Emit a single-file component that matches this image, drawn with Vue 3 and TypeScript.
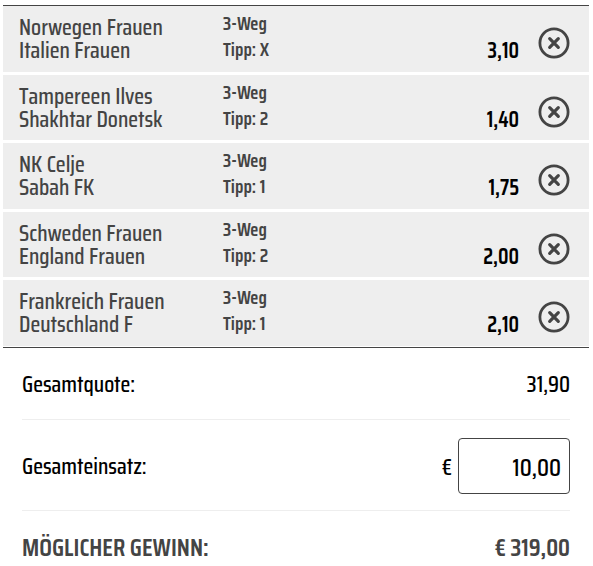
<script setup lang="ts">
import { computed, ref } from 'vue'

interface Bet {
  id: number
  home: string
  away: string
  market: string
  tip: string
  odds: string
}

const bets = ref<Bet[]>([
  { id: 1, home: 'Norwegen Frauen', away: 'Italien Frauen', market: '3-Weg', tip: 'X', odds: '3,10' },
  { id: 2, home: 'Tampereen Ilves', away: 'Shakhtar Donetsk', market: '3-Weg', tip: '2', odds: '1,40' },
  { id: 3, home: 'NK Celje', away: 'Sabah FK', market: '3-Weg', tip: '1', odds: '1,75' },
  { id: 4, home: 'Schweden Frauen', away: 'England Frauen', market: '3-Weg', tip: '2', odds: '2,00' },
  { id: 5, home: 'Frankreich Frauen', away: 'Deutschland F', market: '3-Weg', tip: '1', odds: '2,10' },
])

const stake = ref('10,00')

const parse = (value: string): number => Number(value.replace(',', '.')) || 0
const format = (value: number): string => value.toFixed(2).replace('.', ',')

const totalOdds = computed(() =>
  Math.round(bets.value.reduce((product, bet) => product * parse(bet.odds), 1) * 100) / 100,
)
const winnings = computed(() => totalOdds.value * parse(stake.value))

function removeBet(id: number): void {
  bets.value = bets.value.filter((bet) => bet.id !== id)
}
</script>

<template>
  <main class="slip">
    <ul class="bets">
      <li v-for="bet in bets" :key="bet.id" class="bet">
        <div class="teams">
          <div>{{ bet.home }}</div>
          <div>{{ bet.away }}</div>
        </div>
        <div class="market">
          <div>{{ bet.market }}</div>
          <div>Tipp: {{ bet.tip }}</div>
        </div>
        <div class="odds">{{ bet.odds }}</div>
        <button class="remove" type="button" @click="removeBet(bet.id)">
          <svg viewBox="0 0 32 32" width="32" height="32" fill="none" stroke="currentColor" aria-hidden="true">
            <circle cx="16" cy="16" r="14.1" stroke-width="2.8" />
            <path d="M11.7 11.7l8.6 8.6M20.3 11.7l-8.6 8.6" stroke-width="3.2" stroke-linecap="round" />
          </svg>
        </button>
      </li>
    </ul>
    <section class="summary">
      <div class="line total">
        <span>Gesamtquote:</span>
        <span>{{ format(totalOdds) }}</span>
      </div>
      <div class="line stake">
        <label for="stake">Gesamteinsatz:</label>
        <div class="amount">
          <span class="currency">€</span>
          <input id="stake" v-model="stake" type="text" inputmode="decimal" />
        </div>
      </div>
      <div class="line win">
        <span>MÖGLICHER GEWINN:</span>
        <span>€ {{ format(winnings) }}</span>
      </div>
    </section>
  </main>
</template>

<style>
body {
  background: #fff;
}
</style>

<style scoped>
.slip {
  padding: 5px 4px 0 3px;
  font-family: "Saira Condensed", "Liberation Sans Narrow", "Roboto Condensed", "Liberation Sans", sans-serif;
  font-size: 23px;
  font-weight: 500;
  line-height: 23px;
  color: #000;
}

.bets {
  display: grid;
  grid-auto-rows: 1fr;
  gap: 3px;
  min-height: 340px;
  margin: 0;
  padding: 0 0 1px;
  list-style: none;
  border-top: 1px solid #444;
  border-bottom: 1px solid #444;
}

.bet {
  display: grid;
  grid-template-columns: 204px 1fr auto 32px;
  align-items: start;
  padding: 0 19px 0 16px;
  background: #eee;
  color: #444;
}

.teams {
  padding-top: 10px;
}

.market {
  padding-top: 4px;
  font-size: 19px;
  font-weight: 600;
  line-height: 26px;
}

.odds {
  padding: 33px 19px 0 0;
  font-size: 22px;
  font-weight: 600;
  color: #000;
}

.remove {
  display: block;
  margin: 21px 0 0;
  padding: 0;
  border: 0;
  background: none;
  color: #444;
  cursor: pointer;
}

.remove svg {
  display: block;
}

.summary {
  padding: 0 19px;
}

.line {
  display: flex;
  align-items: center;
  justify-content: space-between;
}

.total {
  height: 71px;
  border-bottom: 1px solid #eee;
}

.total span {
  padding-top: 2px;
}

.stake {
  padding: 18px 0 16px;
  border-bottom: 1px solid #eee;
}

.amount {
  display: flex;
  align-items: center;
  gap: 6px;
}

.currency {
  padding-top: 2px;
}

.stake input {
  box-sizing: border-box;
  width: 112px;
  height: 56px;
  padding: 2px 8px 0;
  border: 1px solid #444;
  border-radius: 4px;
  background: #fff;
  font: inherit;
  font-size: 25px;
  text-align: right;
  color: #000;
}

.win {
  height: 72px;
  font-size: 25px;
  font-weight: 600;
  color: #444;
}
</style>
